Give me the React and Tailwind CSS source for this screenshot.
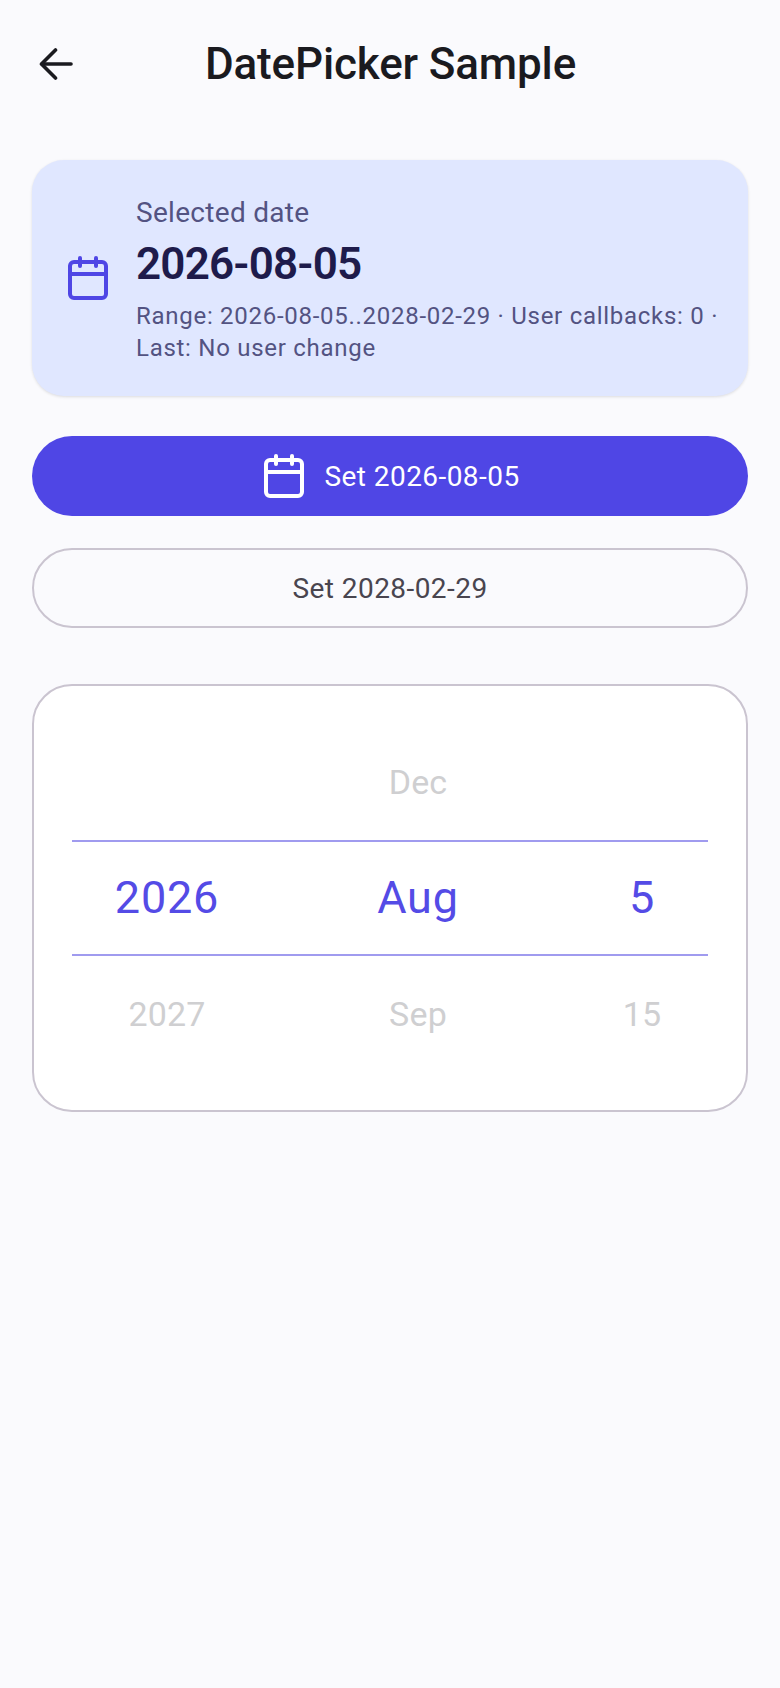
import { Calendar } from 'lucide-react';

const BackArrow = () => (
  <svg viewBox="0 0 34 32" fill="none" stroke="#1a1a1f" strokeWidth="3.6" strokeLinecap="round" strokeLinejoin="round" className="w-[34px] h-[32px]">
    <path d="M32 16H3" />
    <path d="M16.5 2 2.5 16l14 14" />
  </svg>
);

const PickerRow = ({ year, month, day, active }) => (
  <div className={`grid grid-cols-[190px_312px_136px] items-center text-center ${active ? 'h-[112px] text-[45px] tracking-[0.8px] text-[#544be6]' : 'h-[116px] text-[34px] tracking-[0.2px] text-[#cfcfd1]'}`}>
    <span>{year}</span>
    <span>{month}</span>
    <span>{day}</span>
  </div>
);

export default function App() {
  return (
    <div className="w-[780px] min-h-[1688px] bg-[#fafafd] font-['Roboto',sans-serif]">
      {/* App bar */}
      <header className="relative h-[128px] flex items-center justify-center">
        <button className="absolute left-[39px] top-[48px]">
          <BackArrow />
        </button>
        <h1 className="text-[44px] font-medium text-[#1a1a1f] tracking-[-0.15px] ml-[1px]">DatePicker Sample</h1>
      </header>

      <main className="flex flex-col px-[32px] pt-[32px]">
        {/* Summary card */}
        <section className="h-[236px] rounded-[32px] bg-[#e0e7ff] shadow-[0_1px_3px_rgba(0,0,0,0.12)] flex items-center p-[32px] gap-[24px]">
          <Calendar size={48} strokeWidth={2} className="text-[#4f46e5] shrink-0" />
          <div className="flex flex-col">
            <p className="text-[28px] leading-[40px] tracking-[0.3px] text-[#535382] mt-[1px]">Selected date</p>
            <p className="text-[44px] leading-[56px] font-semibold tracking-[-0.8px] text-[#1e1b4b] mt-[3px]">2026-08-05</p>
            <p className="text-[24px] leading-[32px] tracking-[0.72px] whitespace-nowrap text-[#535382] mt-[8px]">Range: 2026-08-05..2028-02-29 · User callbacks: 0 ·<br />Last: No user change</p>
          </div>
        </section>

        {/* Actions */}
        <button className="mt-[40px] h-[80px] rounded-full bg-[#4f46e5] text-white text-[28px] tracking-[0.45px] flex items-center justify-center gap-[16px]">
          <Calendar size={48} strokeWidth={2} />
          <span className="pt-[2px]">Set 2026-08-05</span>
        </button>
        <button className="mt-[32px] h-[80px] pt-[2px] rounded-full border-2 border-[#cac4d0] text-[#49454f] text-[28px] tracking-[0.45px]">
          Set 2028-02-29
        </button>

        {/* Wheel picker */}
        <section className="mt-[56px] h-[428px] rounded-[40px] border-2 border-[#cac4d0] bg-white px-[38px] pt-[38px]">
          <PickerRow month="Dec" />
          <div className="border-y-2 border-[#a09bef]">
            <PickerRow year="2026" month="Aug" day="5" active />
          </div>
          <PickerRow year="2027" month="Sep" day="15" />
        </section>
      </main>
    </div>
  );
}
